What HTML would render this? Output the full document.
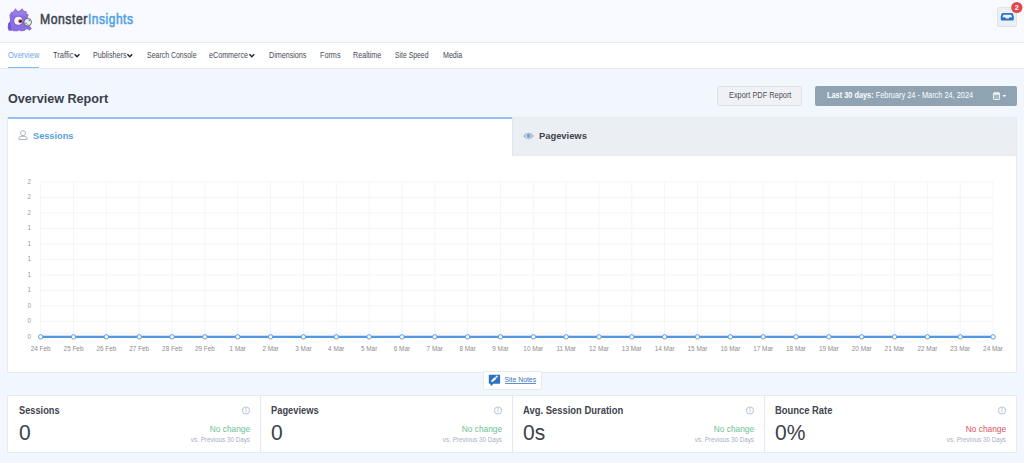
<!DOCTYPE html><html><head><meta charset="utf-8"><style>
*{margin:0;padding:0;box-sizing:border-box}
html,body{width:1024px;height:463px;overflow:hidden;background:#f2f6fd;font-family:"Liberation Sans", sans-serif}
.t{position:absolute;white-space:nowrap;line-height:1;transform-origin:0 0}
.b{position:absolute}
svg{position:absolute;left:0;top:0;overflow:visible}
</style></head><body><div class="b" style="left:0px;top:0px;width:1024px;height:42px;background:#f8faff;"></div>
<div class="b" style="left:0px;top:42px;width:1024px;height:1px;background:#e6ecf6;"></div>
<svg width="40" height="40" viewBox="0 0 40 40" style="left:0;top:0">
<path d="M11.2,12.1 L13.2,11.4 L15.4,8.2 L17.2,10.6 L18.3,11.0 L19.8,10.6 L22.2,8.2 L23.6,10.6 L24.6,11.0 L26.4,11.3 L27.0,13.8 L28.8,14.7 L27.8,17.0 L28.2,19.5 L27.6,24.5 L30.3,26.4 L31.8,28.8 L29.6,30.4 L27.6,29.4 L26.4,29.2 L24.4,30.9 L20.6,31.2 L19.3,30.2 L18.0,31.2 L13.4,31.2 L12.1,30.4 L8.9,30.6 L7.8,27.8 L8.2,23.8 L10.0,21.6 L9.8,18.0 L9.4,15.4 Z" fill="#8b6ee0"/>
<path d="M8.9,30.6 L7.8,27.8 L8.2,23.8 L10.0,21.6 L10.8,24.5 L11.3,29 L12.1,30.4 Z" fill="#7658d2"/>
<path d="M11.8,13.4 L13.6,12.2 L15.4,9.6 L17.2,11.8 L19.8,11.6 L22.2,9.6 L23.6,11.8 L26,12.4 L26.4,14.8 L24,15.5 L14,15.5 Z" fill="#a28ce8" opacity="0.55"/>
<circle cx="18.4" cy="20.8" r="5.0" fill="#7252cc" opacity="0.5"/>
<circle cx="18.3" cy="20.7" r="4.0" fill="#fbf7fa"/>
<circle cx="20.3" cy="21.2" r="2.0" fill="#d44a5e"/>
<circle cx="20.5" cy="21.2" r="1.15" fill="#17171f"/>
<circle cx="27.7" cy="22.2" r="3.8" fill="#e4f0f5" stroke="#4a4f62" stroke-width="0.8"/>
<circle cx="26.0" cy="23.2" r="0.95" fill="#3cc3a0"/>
<circle cx="27.8" cy="24.6" r="0.85" fill="#f2a24a"/>
<circle cx="29.3" cy="20.6" r="0.75" fill="#e2506a"/>
</svg>
<div class="t" style="left:40px;top:12.2px;font-size:14px;color:#41464f;font-weight:400;transform:scaleX(0.873);letter-spacing:0.6px;-webkit-text-stroke:0.55px #41464f">Monster</div>
<div class="t" style="left:88.3px;top:12.2px;font-size:14px;color:#4f9fe5;font-weight:400;transform:scaleX(0.857);letter-spacing:0.6px;-webkit-text-stroke:0.55px #4f9fe5">Insights</div>
<div class="b" style="left:997px;top:7px;width:20px;height:20px;background:#edf0f3;border:1px solid #dfe4e8;border-radius:2px"></div>
<svg width="1024" height="40" style="left:0;top:0">
<path d="M1002.6,13 L1012,13 Q1012.6,13 1012.9,13.6 L1013.8,16.6 L1013.8,19.8 Q1013.8,20.6 1013,20.6 L1001.6,20.6 Q1000.8,20.6 1000.8,19.8 L1000.8,16.6 L1001.7,13.6 Q1002,13 1002.6,13 Z" fill="#2a73c6"/>
<path d="M1003.4,14.7 L1011.2,14.7 L1012.2,17.3 L1009.5,17.3 L1008.7,18.4 L1005.9,18.4 L1005.1,17.3 L1002.4,17.3 Z" fill="#edf0f3"/>
<circle cx="1016.8" cy="7.5" r="5.6" fill="#e3474d"/>
<text x="1016.8" y="10.1" font-family="Liberation Sans" font-weight="700" font-size="7.2" fill="#fff" text-anchor="middle">2</text>
</svg>
<div class="b" style="left:0px;top:43px;width:1024px;height:25px;background:#ffffff;"></div>
<div class="b" style="left:0px;top:68px;width:1024px;height:1px;background:#e6ecf6;"></div>
<div class="b" style="left:8px;top:66.6px;width:31px;height:1.4px;background:#86b6ea;"></div>
<div class="t" style="left:8px;top:51.2px;font-size:9px;color:#6ea8e6;font-weight:400;transform:scaleX(0.837);">Overview</div>
<div class="t" style="left:53px;top:51.2px;font-size:9px;color:#464b55;font-weight:400;transform:scaleX(0.836);">Traffic</div>
<div class="t" style="left:92.8px;top:51.2px;font-size:9px;color:#464b55;font-weight:400;transform:scaleX(0.797);">Publishers</div>
<div class="t" style="left:146.6px;top:51.2px;font-size:9px;color:#464b55;font-weight:400;transform:scaleX(0.773);">Search Console</div>
<div class="t" style="left:209.3px;top:51.2px;font-size:9px;color:#464b55;font-weight:400;transform:scaleX(0.796);">eCommerce</div>
<div class="t" style="left:269px;top:51.2px;font-size:9px;color:#464b55;font-weight:400;transform:scaleX(0.795);">Dimensions</div>
<div class="t" style="left:320px;top:51.2px;font-size:9px;color:#464b55;font-weight:400;transform:scaleX(0.804);">Forms</div>
<div class="t" style="left:353.4px;top:51.2px;font-size:9px;color:#464b55;font-weight:400;transform:scaleX(0.797);">Realtime</div>
<div class="t" style="left:395.4px;top:51.2px;font-size:9px;color:#464b55;font-weight:400;transform:scaleX(0.76);">Site Speed</div>
<div class="t" style="left:442.8px;top:51.2px;font-size:9px;color:#464b55;font-weight:400;transform:scaleX(0.787);">Media</div>
<svg width="1024" height="80" style="left:0;top:0"><path d="M74.6,54.3 L77.0,56.7 L79.4,54.3" fill="none" stroke="#23282d" stroke-width="1.5"/><path d="M127.4,54.3 L129.8,56.7 L132.20000000000002,54.3" fill="none" stroke="#23282d" stroke-width="1.5"/><path d="M249.4,54.3 L251.8,56.7 L254.20000000000002,54.3" fill="none" stroke="#23282d" stroke-width="1.5"/></svg>
<div class="t" style="left:8px;top:92.8px;font-size:12.6px;color:#393f4c;font-weight:700;">Overview Report</div>
<div class="b" style="left:717px;top:86px;width:85px;height:19.5px;background:#eff1f5;border:1px solid #dde3ea;border-radius:2px"></div>
<div class="t" style="left:728.8px;top:91.3px;font-size:8.5px;color:#4a4f58;font-weight:400;transform:scaleX(0.869);">Export PDF Report</div>
<div class="b" style="left:815px;top:86px;width:202px;height:20px;background:#8fa3b3;border-radius:2px"></div>
<div class="t" style="left:827px;top:91.3px;font-size:8.5px;color:#ffffff;font-weight:400;transform:scaleX(0.866);"><b>Last 30 days:</b> February 24 - March 24, 2024</div>
<svg width="1024" height="120" style="left:0;top:0">
<rect x="993.4" y="92.9" width="6.2" height="6.6" rx="0.7" fill="#a9bac7" stroke="#f4f7f9" stroke-width="0.9"/>
<rect x="993.4" y="92.9" width="6.2" height="1.7" fill="#f4f7f9"/>
<rect x="994.6" y="91.9" width="1" height="1.2" fill="#f4f7f9"/><rect x="997.4" y="91.9" width="1" height="1.2" fill="#f4f7f9"/>
<path d="M1002.6,95 L1006.2,95 L1004.4,97.2 Z" fill="#fff"/>
</svg>
<div class="b" style="left:7px;top:117px;width:1010px;height:256px;background:#ffffff;border:1px solid #e3ebf3"></div>
<div class="b" style="left:8px;top:117px;width:504px;height:2px;background:#94c0ee;"></div>
<div class="b" style="left:512px;top:118px;width:504px;height:37.5px;background:#ebeef3;border-left:1px solid #dce4ee;border-bottom:1px solid #e6ebf1"></div>
<div class="t" style="left:33.4px;top:130.6px;font-size:9.5px;color:#5a9de0;font-weight:700;transform:scaleX(0.968);">Sessions</div>
<div class="t" style="left:539px;top:131.2px;font-size:9.5px;color:#3e424a;font-weight:700;transform:scaleX(0.985);">Pageviews</div>
<svg width="1024" height="200" style="left:0;top:0">
<circle cx="23" cy="133.2" r="2.5" fill="none" stroke="#9aa5b3" stroke-width="0.8"/>
<path d="M19,139.6 L19,138.6 Q19,136.4 21.2,136.4 L24.8,136.4 Q27,136.4 27,138.6 L27,139.6 Z" fill="none" stroke="#9aa5b3" stroke-width="0.8"/>
<path d="M523,136 Q528.5,129.6 534,136 Q528.5,142.4 523,136 Z" fill="#9fb6cf"/>
<path d="M524.8,136 Q528.5,131.4 532.2,136 Q528.5,140.6 524.8,136 Z" fill="#d9e4ef"/>
<circle cx="528.6" cy="135.8" r="1.9" fill="#809dbe"/>
</svg>
<svg width="1024" height="463" style="left:0;top:0"><line x1="40.70" y1="181.9" x2="40.70" y2="336.9" stroke="#f1f6f7" stroke-width="1"/><line x1="73.54" y1="181.9" x2="73.54" y2="336.9" stroke="#f1f6f7" stroke-width="1"/><line x1="106.38" y1="181.9" x2="106.38" y2="336.9" stroke="#f1f6f7" stroke-width="1"/><line x1="139.22" y1="181.9" x2="139.22" y2="336.9" stroke="#f1f6f7" stroke-width="1"/><line x1="172.06" y1="181.9" x2="172.06" y2="336.9" stroke="#f1f6f7" stroke-width="1"/><line x1="204.90" y1="181.9" x2="204.90" y2="336.9" stroke="#f1f6f7" stroke-width="1"/><line x1="237.74" y1="181.9" x2="237.74" y2="336.9" stroke="#f1f6f7" stroke-width="1"/><line x1="270.58" y1="181.9" x2="270.58" y2="336.9" stroke="#f1f6f7" stroke-width="1"/><line x1="303.42" y1="181.9" x2="303.42" y2="336.9" stroke="#f1f6f7" stroke-width="1"/><line x1="336.26" y1="181.9" x2="336.26" y2="336.9" stroke="#f1f6f7" stroke-width="1"/><line x1="369.10" y1="181.9" x2="369.10" y2="336.9" stroke="#f1f6f7" stroke-width="1"/><line x1="401.94" y1="181.9" x2="401.94" y2="336.9" stroke="#f1f6f7" stroke-width="1"/><line x1="434.78" y1="181.9" x2="434.78" y2="336.9" stroke="#f1f6f7" stroke-width="1"/><line x1="467.62" y1="181.9" x2="467.62" y2="336.9" stroke="#f1f6f7" stroke-width="1"/><line x1="500.46" y1="181.9" x2="500.46" y2="336.9" stroke="#f1f6f7" stroke-width="1"/><line x1="533.30" y1="181.9" x2="533.30" y2="336.9" stroke="#f1f6f7" stroke-width="1"/><line x1="566.14" y1="181.9" x2="566.14" y2="336.9" stroke="#f1f6f7" stroke-width="1"/><line x1="598.98" y1="181.9" x2="598.98" y2="336.9" stroke="#f1f6f7" stroke-width="1"/><line x1="631.82" y1="181.9" x2="631.82" y2="336.9" stroke="#f1f6f7" stroke-width="1"/><line x1="664.66" y1="181.9" x2="664.66" y2="336.9" stroke="#f1f6f7" stroke-width="1"/><line x1="697.50" y1="181.9" x2="697.50" y2="336.9" stroke="#f1f6f7" stroke-width="1"/><line x1="730.34" y1="181.9" x2="730.34" y2="336.9" stroke="#f1f6f7" stroke-width="1"/><line x1="763.18" y1="181.9" x2="763.18" y2="336.9" stroke="#f1f6f7" stroke-width="1"/><line x1="796.02" y1="181.9" x2="796.02" y2="336.9" stroke="#f1f6f7" stroke-width="1"/><line x1="828.86" y1="181.9" x2="828.86" y2="336.9" stroke="#f1f6f7" stroke-width="1"/><line x1="861.70" y1="181.9" x2="861.70" y2="336.9" stroke="#f1f6f7" stroke-width="1"/><line x1="894.54" y1="181.9" x2="894.54" y2="336.9" stroke="#f1f6f7" stroke-width="1"/><line x1="927.38" y1="181.9" x2="927.38" y2="336.9" stroke="#f1f6f7" stroke-width="1"/><line x1="960.22" y1="181.9" x2="960.22" y2="336.9" stroke="#f1f6f7" stroke-width="1"/><line x1="993.06" y1="181.9" x2="993.06" y2="336.9" stroke="#f1f6f7" stroke-width="1"/><line x1="40.7" y1="181.90" x2="993.06" y2="181.90" stroke="#f3f4f8" stroke-width="1"/><line x1="40.7" y1="197.40" x2="993.06" y2="197.40" stroke="#f3f4f8" stroke-width="1"/><line x1="40.7" y1="212.90" x2="993.06" y2="212.90" stroke="#f3f4f8" stroke-width="1"/><line x1="40.7" y1="228.40" x2="993.06" y2="228.40" stroke="#f3f4f8" stroke-width="1"/><line x1="40.7" y1="243.90" x2="993.06" y2="243.90" stroke="#f3f4f8" stroke-width="1"/><line x1="40.7" y1="259.40" x2="993.06" y2="259.40" stroke="#f3f4f8" stroke-width="1"/><line x1="40.7" y1="274.90" x2="993.06" y2="274.90" stroke="#f3f4f8" stroke-width="1"/><line x1="40.7" y1="290.40" x2="993.06" y2="290.40" stroke="#f3f4f8" stroke-width="1"/><line x1="40.7" y1="305.90" x2="993.06" y2="305.90" stroke="#f3f4f8" stroke-width="1"/><line x1="40.7" y1="321.40" x2="993.06" y2="321.40" stroke="#f3f4f8" stroke-width="1"/><line x1="40.7" y1="336.90" x2="993.06" y2="336.90" stroke="#f3f4f8" stroke-width="1"/><text x="31" y="183.50" font-family="Liberation Sans" font-size="6.3" fill="#9a9a9a" text-anchor="end">2</text><text x="31" y="199.00" font-family="Liberation Sans" font-size="6.3" fill="#9a9a9a" text-anchor="end">2</text><text x="31" y="214.50" font-family="Liberation Sans" font-size="6.3" fill="#9a9a9a" text-anchor="end">2</text><text x="31" y="230.00" font-family="Liberation Sans" font-size="6.3" fill="#9a9a9a" text-anchor="end">1</text><text x="31" y="245.50" font-family="Liberation Sans" font-size="6.3" fill="#9a9a9a" text-anchor="end">1</text><text x="31" y="261.00" font-family="Liberation Sans" font-size="6.3" fill="#9a9a9a" text-anchor="end">1</text><text x="31" y="276.50" font-family="Liberation Sans" font-size="6.3" fill="#9a9a9a" text-anchor="end">1</text><text x="31" y="292.00" font-family="Liberation Sans" font-size="6.3" fill="#9a9a9a" text-anchor="end">1</text><text x="31" y="307.50" font-family="Liberation Sans" font-size="6.3" fill="#9a9a9a" text-anchor="end">0</text><text x="31" y="323.00" font-family="Liberation Sans" font-size="6.3" fill="#9a9a9a" text-anchor="end">0</text><text x="31" y="338.50" font-family="Liberation Sans" font-size="6.3" fill="#9a9a9a" text-anchor="end">0</text><defs><linearGradient id="sh" x1="0" y1="0" x2="0" y2="1"><stop offset="0" stop-color="#000" stop-opacity="0"/><stop offset="1" stop-color="#000" stop-opacity="0.035"/></linearGradient></defs><rect x="40.7" y="328.9" width="952.36" height="8" fill="url(#sh)"/><line x1="40.7" y1="336.9" x2="993.06" y2="336.9" stroke="#519ae2" stroke-width="2.3"/><circle cx="40.70" cy="336.9" r="2.2" fill="#fff" stroke="#5a9de0" stroke-width="1"/><text x="40.70" y="350.7" font-family="Liberation Sans" font-size="6.4" fill="#8e8e8e" text-anchor="middle">24 Feb</text><circle cx="73.54" cy="336.9" r="2.2" fill="#fff" stroke="#5a9de0" stroke-width="1"/><text x="73.54" y="350.7" font-family="Liberation Sans" font-size="6.4" fill="#8e8e8e" text-anchor="middle">25 Feb</text><circle cx="106.38" cy="336.9" r="2.2" fill="#fff" stroke="#5a9de0" stroke-width="1"/><text x="106.38" y="350.7" font-family="Liberation Sans" font-size="6.4" fill="#8e8e8e" text-anchor="middle">26 Feb</text><circle cx="139.22" cy="336.9" r="2.2" fill="#fff" stroke="#5a9de0" stroke-width="1"/><text x="139.22" y="350.7" font-family="Liberation Sans" font-size="6.4" fill="#8e8e8e" text-anchor="middle">27 Feb</text><circle cx="172.06" cy="336.9" r="2.2" fill="#fff" stroke="#5a9de0" stroke-width="1"/><text x="172.06" y="350.7" font-family="Liberation Sans" font-size="6.4" fill="#8e8e8e" text-anchor="middle">28 Feb</text><circle cx="204.90" cy="336.9" r="2.2" fill="#fff" stroke="#5a9de0" stroke-width="1"/><text x="204.90" y="350.7" font-family="Liberation Sans" font-size="6.4" fill="#8e8e8e" text-anchor="middle">29 Feb</text><circle cx="237.74" cy="336.9" r="2.2" fill="#fff" stroke="#5a9de0" stroke-width="1"/><text x="237.74" y="350.7" font-family="Liberation Sans" font-size="6.4" fill="#8e8e8e" text-anchor="middle">1 Mar</text><circle cx="270.58" cy="336.9" r="2.2" fill="#fff" stroke="#5a9de0" stroke-width="1"/><text x="270.58" y="350.7" font-family="Liberation Sans" font-size="6.4" fill="#8e8e8e" text-anchor="middle">2 Mar</text><circle cx="303.42" cy="336.9" r="2.2" fill="#fff" stroke="#5a9de0" stroke-width="1"/><text x="303.42" y="350.7" font-family="Liberation Sans" font-size="6.4" fill="#8e8e8e" text-anchor="middle">3 Mar</text><circle cx="336.26" cy="336.9" r="2.2" fill="#fff" stroke="#5a9de0" stroke-width="1"/><text x="336.26" y="350.7" font-family="Liberation Sans" font-size="6.4" fill="#8e8e8e" text-anchor="middle">4 Mar</text><circle cx="369.10" cy="336.9" r="2.2" fill="#fff" stroke="#5a9de0" stroke-width="1"/><text x="369.10" y="350.7" font-family="Liberation Sans" font-size="6.4" fill="#8e8e8e" text-anchor="middle">5 Mar</text><circle cx="401.94" cy="336.9" r="2.2" fill="#fff" stroke="#5a9de0" stroke-width="1"/><text x="401.94" y="350.7" font-family="Liberation Sans" font-size="6.4" fill="#8e8e8e" text-anchor="middle">6 Mar</text><circle cx="434.78" cy="336.9" r="2.2" fill="#fff" stroke="#5a9de0" stroke-width="1"/><text x="434.78" y="350.7" font-family="Liberation Sans" font-size="6.4" fill="#8e8e8e" text-anchor="middle">7 Mar</text><circle cx="467.62" cy="336.9" r="2.2" fill="#fff" stroke="#5a9de0" stroke-width="1"/><text x="467.62" y="350.7" font-family="Liberation Sans" font-size="6.4" fill="#8e8e8e" text-anchor="middle">8 Mar</text><circle cx="500.46" cy="336.9" r="2.2" fill="#fff" stroke="#5a9de0" stroke-width="1"/><text x="500.46" y="350.7" font-family="Liberation Sans" font-size="6.4" fill="#8e8e8e" text-anchor="middle">9 Mar</text><circle cx="533.30" cy="336.9" r="2.2" fill="#fff" stroke="#5a9de0" stroke-width="1"/><text x="533.30" y="350.7" font-family="Liberation Sans" font-size="6.4" fill="#8e8e8e" text-anchor="middle">10 Mar</text><circle cx="566.14" cy="336.9" r="2.2" fill="#fff" stroke="#5a9de0" stroke-width="1"/><text x="566.14" y="350.7" font-family="Liberation Sans" font-size="6.4" fill="#8e8e8e" text-anchor="middle">11 Mar</text><circle cx="598.98" cy="336.9" r="2.2" fill="#fff" stroke="#5a9de0" stroke-width="1"/><text x="598.98" y="350.7" font-family="Liberation Sans" font-size="6.4" fill="#8e8e8e" text-anchor="middle">12 Mar</text><circle cx="631.82" cy="336.9" r="2.2" fill="#fff" stroke="#5a9de0" stroke-width="1"/><text x="631.82" y="350.7" font-family="Liberation Sans" font-size="6.4" fill="#8e8e8e" text-anchor="middle">13 Mar</text><circle cx="664.66" cy="336.9" r="2.2" fill="#fff" stroke="#5a9de0" stroke-width="1"/><text x="664.66" y="350.7" font-family="Liberation Sans" font-size="6.4" fill="#8e8e8e" text-anchor="middle">14 Mar</text><circle cx="697.50" cy="336.9" r="2.2" fill="#fff" stroke="#5a9de0" stroke-width="1"/><text x="697.50" y="350.7" font-family="Liberation Sans" font-size="6.4" fill="#8e8e8e" text-anchor="middle">15 Mar</text><circle cx="730.34" cy="336.9" r="2.2" fill="#fff" stroke="#5a9de0" stroke-width="1"/><text x="730.34" y="350.7" font-family="Liberation Sans" font-size="6.4" fill="#8e8e8e" text-anchor="middle">16 Mar</text><circle cx="763.18" cy="336.9" r="2.2" fill="#fff" stroke="#5a9de0" stroke-width="1"/><text x="763.18" y="350.7" font-family="Liberation Sans" font-size="6.4" fill="#8e8e8e" text-anchor="middle">17 Mar</text><circle cx="796.02" cy="336.9" r="2.2" fill="#fff" stroke="#5a9de0" stroke-width="1"/><text x="796.02" y="350.7" font-family="Liberation Sans" font-size="6.4" fill="#8e8e8e" text-anchor="middle">18 Mar</text><circle cx="828.86" cy="336.9" r="2.2" fill="#fff" stroke="#5a9de0" stroke-width="1"/><text x="828.86" y="350.7" font-family="Liberation Sans" font-size="6.4" fill="#8e8e8e" text-anchor="middle">19 Mar</text><circle cx="861.70" cy="336.9" r="2.2" fill="#fff" stroke="#5a9de0" stroke-width="1"/><text x="861.70" y="350.7" font-family="Liberation Sans" font-size="6.4" fill="#8e8e8e" text-anchor="middle">20 Mar</text><circle cx="894.54" cy="336.9" r="2.2" fill="#fff" stroke="#5a9de0" stroke-width="1"/><text x="894.54" y="350.7" font-family="Liberation Sans" font-size="6.4" fill="#8e8e8e" text-anchor="middle">21 Mar</text><circle cx="927.38" cy="336.9" r="2.2" fill="#fff" stroke="#5a9de0" stroke-width="1"/><text x="927.38" y="350.7" font-family="Liberation Sans" font-size="6.4" fill="#8e8e8e" text-anchor="middle">22 Mar</text><circle cx="960.22" cy="336.9" r="2.2" fill="#fff" stroke="#5a9de0" stroke-width="1"/><text x="960.22" y="350.7" font-family="Liberation Sans" font-size="6.4" fill="#8e8e8e" text-anchor="middle">23 Mar</text><circle cx="993.06" cy="336.9" r="2.2" fill="#fff" stroke="#5a9de0" stroke-width="1"/><text x="993.06" y="350.7" font-family="Liberation Sans" font-size="6.4" fill="#8e8e8e" text-anchor="middle">24 Mar</text></svg>
<div class="b" style="left:483px;top:371px;width:58.5px;height:18.5px;background:#ffffff;border:1px solid #e4eaf2;border-radius:0 0 2px 2px"></div>
<svg width="1024" height="463" style="left:0;top:0">
<path d="M489.5,374.7 L499.4,374.7 Q500.1,374.7 500.1,375.4 L500.1,383.1 Q500.1,383.8 499.4,383.8 L493.4,383.8 L491.2,386.1 L490.1,383.8 L489.5,383.8 Q488.8,383.8 488.8,383.1 L488.8,375.4 Q488.8,374.7 489.5,374.7 Z" fill="#2b74c4"/>
<path d="M491.1,382.0 L491.7,380.0 L495.0,376.9 L496.5,378.4 L493.2,381.5 Z" fill="#fff"/>
<path d="M495.5,376.4 L496.3,375.7 Q496.7,375.4 497.1,375.7 L497.7,376.3 Q498,376.7 497.7,377.1 L497.0,377.9 Z" fill="#fff"/>
</svg>
<div class="t" style="left:504.5px;top:377.3px;font-size:6.85px;color:#3474bb;font-weight:400;">Site Notes</div>
<div class="b" style="left:504.5px;top:383px;width:31.6px;height:0.8px;background:#5f90cc;"></div>
<div class="b" style="left:7px;top:395px;width:1010px;height:58px;background:#ffffff;border:1px solid #e3ebf3"></div>
<div class="b" style="left:260px;top:396px;width:1px;height:56px;background:#e2e9f3;"></div>
<div class="b" style="left:512px;top:396px;width:1px;height:56px;background:#e2e9f3;"></div>
<div class="b" style="left:764px;top:396px;width:1px;height:56px;background:#e2e9f3;"></div>
<div class="t" style="left:19.4px;top:406.0px;font-size:10.0px;color:#3f444d;font-weight:700;transform:scaleX(0.924);">Sessions</div>
<div class="t" style="left:19.3px;top:422.0px;font-size:22px;color:#3b4049;font-weight:400;transform:scaleX(0.955);">0</div>
<div class="t" style="left:140.0px;width:110px;text-align:right;top:424.85px;font-size:8.3px;color:#6bbf95">No change</div>
<div class="t" style="left:140.0px;width:110px;text-align:right;top:436.65px;font-size:6.3px;color:#a7b1bd">vs. Previous 30 Days</div>
<div class="t" style="left:271.4px;top:406.0px;font-size:10.0px;color:#3f444d;font-weight:700;transform:scaleX(0.93);">Pageviews</div>
<div class="t" style="left:271.3px;top:422.0px;font-size:22px;color:#3b4049;font-weight:400;transform:scaleX(0.955);">0</div>
<div class="t" style="left:392.0px;width:110px;text-align:right;top:424.85px;font-size:8.3px;color:#6bbf95">No change</div>
<div class="t" style="left:392.0px;width:110px;text-align:right;top:436.65px;font-size:6.3px;color:#a7b1bd">vs. Previous 30 Days</div>
<div class="t" style="left:523.4px;top:406.0px;font-size:10.0px;color:#3f444d;font-weight:700;transform:scaleX(0.943);">Avg. Session Duration</div>
<div class="t" style="left:523.3px;top:422.0px;font-size:22px;color:#3b4049;font-weight:400;transform:scaleX(0.955);">0s</div>
<div class="t" style="left:644.0px;width:110px;text-align:right;top:424.85px;font-size:8.3px;color:#6bbf95">No change</div>
<div class="t" style="left:644.0px;width:110px;text-align:right;top:436.65px;font-size:6.3px;color:#a7b1bd">vs. Previous 30 Days</div>
<div class="t" style="left:775.4px;top:406.0px;font-size:10.0px;color:#3f444d;font-weight:700;transform:scaleX(0.939);">Bounce Rate</div>
<div class="t" style="left:775.3px;top:422.0px;font-size:22px;color:#3b4049;font-weight:400;transform:scaleX(0.955);">0%</div>
<div class="t" style="left:896.0px;width:110px;text-align:right;top:424.85px;font-size:8.3px;color:#e0505a">No change</div>
<div class="t" style="left:896.0px;width:110px;text-align:right;top:436.65px;font-size:6.3px;color:#a7b1bd">vs. Previous 30 Days</div>
<svg width="1024" height="463" style="left:0;top:0"><circle cx="246.0" cy="410.5" r="3.6" fill="none" stroke="#a2b5cd" stroke-width="0.8"/><rect x="245.6" y="409.3" width="0.8" height="3" fill="#a2b5cd"/><rect x="245.6" y="408.0" width="0.8" height="0.8" fill="#a2b5cd"/><circle cx="498.0" cy="410.5" r="3.6" fill="none" stroke="#a2b5cd" stroke-width="0.8"/><rect x="497.6" y="409.3" width="0.8" height="3" fill="#a2b5cd"/><rect x="497.6" y="408.0" width="0.8" height="0.8" fill="#a2b5cd"/><circle cx="750.0" cy="410.5" r="3.6" fill="none" stroke="#a2b5cd" stroke-width="0.8"/><rect x="749.6" y="409.3" width="0.8" height="3" fill="#a2b5cd"/><rect x="749.6" y="408.0" width="0.8" height="0.8" fill="#a2b5cd"/><circle cx="1002.0" cy="410.5" r="3.6" fill="none" stroke="#a2b5cd" stroke-width="0.8"/><rect x="1001.6" y="409.3" width="0.8" height="3" fill="#a2b5cd"/><rect x="1001.6" y="408.0" width="0.8" height="0.8" fill="#a2b5cd"/></svg></body></html>
